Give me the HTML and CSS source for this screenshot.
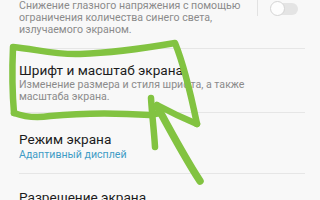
FILE: index.html
```html
<!DOCTYPE html>
<html lang="ru">
<head>
<meta charset="utf-8">
<link rel="stylesheet" href="styles.css">
</head>
<body>
<div class="screen">
  <div class="item item-first">
    <div class="texts">
      <div class="sub">Снижение глазного напряжения с помощью<br>ограничения количества синего света,<br>излучаемого экраном.</div>
    </div>
    <div class="divider"></div>
    <div class="switch"><span class="knob"></span></div>
  </div>
  <div class="item item-font">
    <div class="title">Шрифт и масштаб экрана</div>
    <div class="sub">Изменение размера и стиля шрифта, а также<br>масштаба экрана.</div>
  </div>
  <div class="item item-mode">
    <div class="title">Режим экрана</div>
    <div class="sub accent">Адаптивный дисплей</div>
  </div>
  <div class="item item-res">
    <div class="title">Разрешение экрана</div>
  </div>
  <svg class="scribble" width="320" height="200" viewBox="0 0 320 200">
    <path d="M14 113 C12 90 12 70 13 47 C35 49 55 55 80 54 C110 53 140 49 175 43 C184 65 191 95 197 124" />
    <path d="M14 113 C25 117 38 118 50 116 C80 113 120 113 150 115 L160 113" />
    <path d="M151 98 C152 115 154 130 155 147" />
    <path d="M157 105 C170 112 185 119 197 124" />
    <path class="shaft" d="M157 106 C170 130 185 158 200 181" />
  </svg>
</div>
</body>
</html>
```
FILE: styles.css
```css
html, body {
  margin: 0;
  padding: 0;
  background: #f8f8f8;
}
.screen {
  position: relative;
  width: 320px;
  height: 200px;
  overflow: hidden;
  font-family: Roboto, "Noto Sans", sans-serif;
}
.item {
  margin-left: 19px;
  width: 286px;
  border-bottom: 1px solid #e6e6e6;
  box-sizing: border-box;
}
.item-first {
  display: flex;
  align-items: flex-start;
  padding: 0 0 12px 0;
  height: 49px;
}
.texts {
  flex: 1;
}
.divider {
  width: 1px;
  height: 16px;
  background: #e2e2e2;
  margin-right: 13px;
}
.switch {
  position: relative;
  width: 27px;
  height: 12px;
  margin-top: 3px;
  margin-right: 7px;
  border-radius: 7px;
  background: #e4e4e4;
}
.knob {
  position: absolute;
  left: -1px;
  top: -2px;
  width: 13px;
  height: 13px;
  border-radius: 50%;
  background: #fdfdfd;
  border: 1px solid #d4d4d4;
}
.sub {
  font-size: 10.6px;
  line-height: 12px;
  color: #8b8b8b;
}
.accent {
  color: #3f9cc6;
}
.title {
  font-size: 13.6px;
  line-height: 17px;
  color: #1c1c1c;
}
.item-font {
  height: 64px;
  padding-top: 13px;
}
.item-mode {
  height: 61px;
  padding-top: 18px;
}
.item-mode .sub {
  margin-top: 1px;
}
.item-res {
  border-bottom: none;
  padding-top: 15px;
}
.scribble {
  position: absolute;
  left: 0;
  top: 0;
}
.scribble path {
  fill: none;
  stroke: #82c341;
  stroke-width: 6.5;
  stroke-linecap: round;
  stroke-linejoin: round;
}
.scribble .shaft {
  stroke-width: 7.5;
}
```
